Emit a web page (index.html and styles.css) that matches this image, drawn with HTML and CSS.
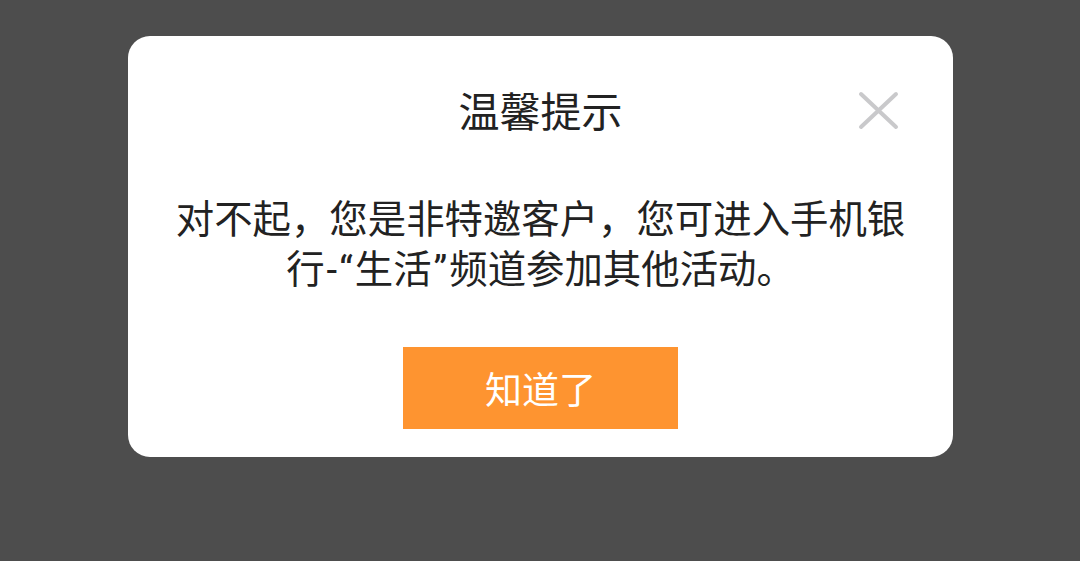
FILE: index.html
```html
<!DOCTYPE html>
<html lang="zh-CN">
<head>
<meta charset="utf-8">
<title>温馨提示</title>
<link rel="stylesheet" href="styles.css">
</head>
<body>
<div class="overlay">
  <div class="dialog">
    <h2 class="dialog-title">温馨提示</h2>
    <svg class="dialog-close" viewBox="0 0 41 39" width="41" height="39" aria-label="关闭">
      <path d="M3 3 L38 36 M38 3 L3 36" stroke="#c9c9cb" stroke-width="4" stroke-linecap="round" fill="none"/>
    </svg>
    <p class="dialog-body">对不起，您是非特邀客户，您可进入手机银行<span class="latin">-“</span>生活<span class="latin">”</span>频道参加其他活动。</p>
    <button class="dialog-btn">知道了</button>
  </div>
</div>
</body>
</html>
```

FILE: styles.css
```css
html, body {
  margin: 0;
  padding: 0;
  width: 1080px;
  height: 561px;
  background: #4d4d4d;
  overflow: hidden;
}

.overlay {
  display: flex;
  justify-content: center;
  padding-top: 36px;
  font-family: "Noto Sans CJK SC", "Noto Sans", sans-serif;
}

.dialog {
  position: relative;
  box-sizing: border-box;
  width: 825px;
  height: 421px;
  margin-left: 1px;
  background: #ffffff;
  border-radius: 22px;
  padding: 45px 40px 28px;
  display: flex;
  flex-direction: column;
  align-items: center;
}

.dialog-title {
  margin: 0;
  font-size: 41px;
  line-height: 56px;
  font-weight: normal;
  color: #222222;
}

.dialog-close {
  position: absolute;
  left: 730px;
  top: 55px;
}

.dialog-body {
  margin: 54px 0 0;
  width: 745px;
  height: 100px;
  font-size: 38.4px;
  line-height: 50px;
  text-align: center;
  color: #222222;
}

.latin {
  font-family: Roboto, "Noto Sans", sans-serif;
  line-height: 20px;
  letter-spacing: 2px;
  padding-left: 2px;
}

.dialog-btn {
  margin-top: 56px;
  width: 275px;
  height: 82px;
  border: none;
  border-radius: 0;
  background: #fe9430;
  color: #ffffff;
  font-family: "Noto Sans CJK SC", "Noto Sans", sans-serif;
  font-size: 37px;
  line-height: 82px;
  padding: 0;
}
```
